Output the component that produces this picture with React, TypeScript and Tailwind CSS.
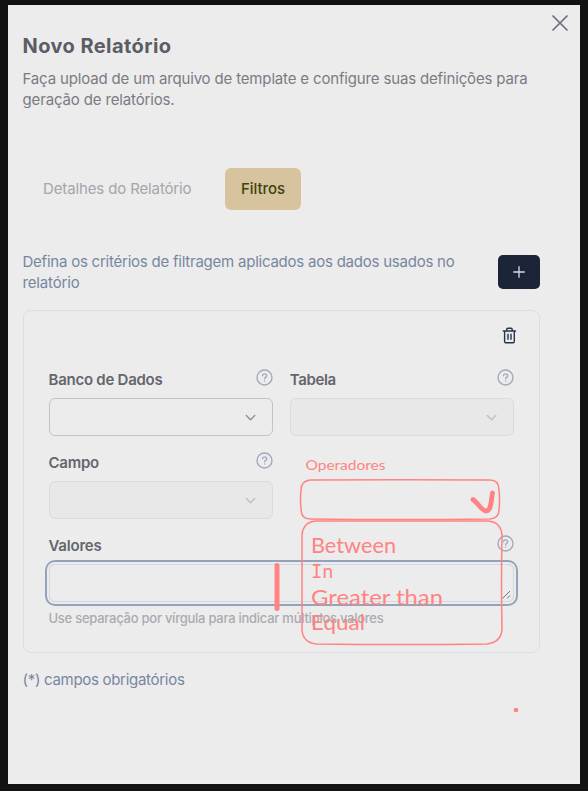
import React from "react";

const font = "font-['Inter',sans-serif]";

function Line({ children, w, className = "" }: { children: string; w: number; className?: string }) {
  const ref = React.useRef<HTMLSpanElement>(null);
  const [gap, setGap] = React.useState(0);
  React.useLayoutEffect(() => {
    if (ref.current) setGap((w - ref.current.getBoundingClientRect().width) / children.length);
  }, [w, children]);
  return (
    <span className={`block w-max whitespace-nowrap ${className}`}>
      <span ref={ref} style={{ letterSpacing: gap }}>{children}</span>
    </span>
  );
}

function Help() {
  return (
    <svg className="mb-1 size-[17px] text-[#a2aabb]" viewBox="0 0 17 17" fill="none" stroke="currentColor" strokeWidth="1.4" strokeLinecap="round" strokeLinejoin="round">
      <circle cx="8.5" cy="8.5" r="7.5" />
      <path d="M6.5 6.7c.2-1.2 1-1.8 2.1-1.8 1.2 0 2.1.7 2.1 1.8 0 1.6-2.1 1.7-2.1 3.1M8.6 12v.1" />
    </svg>
  );
}

function Label({ text, w }: { text: string; w: number }) {
  return (
    <div className="flex h-[23px] items-center justify-between text-[15px] leading-[23px] font-semibold text-[#65656d]">
      <Line w={w}>{text}</Line>
      <Help />
    </div>
  );
}

function Select({ disabled = false }: { disabled?: boolean }) {
  return (
    <div className={`mt-[7px] flex h-[38px] items-center justify-end rounded-md border pr-4 ${disabled ? "border-[#dbdbdc] bg-[#e8e8e8] text-[#bfc0c2]" : "border-[#c4c4c5] bg-[#ececec] text-[#8f949c]"}`}>
      <svg className="size-[11px]" viewBox="0 0 11 11" fill="none" stroke="currentColor" strokeWidth="1.5" strokeLinecap="round" strokeLinejoin="round">
        <path d="M1.3 3.5 5.5 7.7 9.7 3.5" />
      </svg>
    </div>
  );
}

function Sketch() {
  return (
    <svg className="pointer-events-none absolute inset-0 h-[791px] w-[588px]" viewBox="0 0 588 791" fill="none" stroke="#ff8383" strokeLinecap="round" strokeLinejoin="round">
      <path strokeWidth="1.5" d="M310 480Q401 479.500 490 480Q499 480 499 490Q500 500 499 510Q499 518 490 519Q400 520 310 519Q301 519 301 509Q300 500 301 490Q301 481 310 480Z" />
      <path strokeWidth="1.5" d="M316 521H488Q501 522 502 535Q501 585 502 628Q502 642 487 644Q400 645 317 644Q303 643 302 630V535Q303 522 316 521Z" />
      <path strokeWidth="4.8" d="M473 499.500C478 503 482 511 486 511C491.500 511 491 500 492.500 493" />
      <path strokeWidth="5" d="M277 565.500V608.500" />
      <circle cx="516" cy="710" r="2.3" fill="#ff8383" stroke="none" />
      <g fill="#ff8383" stroke="none" className="font-['Lato',sans-serif]">
        <text x="305.500" y="469.500" fontSize="13.5" textLength="80" lengthAdjust="spacingAndGlyphs">Operadores</text>
        <text x="311" y="552.500" fontSize="22" textLength="85" lengthAdjust="spacingAndGlyphs">Between</text>
        <text x="311" y="578" fontSize="19" textLength="22" lengthAdjust="spacingAndGlyphs"><tspan className="font-['DejaVu_Sans_Mono',monospace]">I</tspan>n</text>
        <text x="311" y="604.500" fontSize="21" textLength="132" lengthAdjust="spacingAndGlyphs">Greater than</text>
        <text x="311" y="630" fontSize="21" textLength="54" lengthAdjust="spacingAndGlyphs">Equal</text>
      </g>
    </svg>
  );
}

export default function App() {
  return (
    <div className={`relative h-[791px] w-[588px] overflow-hidden bg-[#121212] px-2 pt-[5px] ${font}`}>
      <main className="h-[779px] bg-[#ececec] pr-[40px] pl-[14.5px]">
        <svg className="absolute top-[15px] left-[552px] size-4 text-[#696f7d]" viewBox="0 0 16 16" fill="none" stroke="currentColor" strokeWidth="1.7" strokeLinecap="round">
          <path d="m1 1 14 14M15 1 1 15" />
        </svg>
        <header className="pt-[27px]">
          <h1 className="text-xl leading-7 font-bold text-[#5c5c66]"><Line w={149}>Novo Relatório</Line></h1>
          <div className="mt-2 text-[15px] leading-[21px] text-[#7b7b83]">
            <Line w={505}>Faça upload de um arquivo de template e configure suas definições para</Line>
            <Line w={152}>geração de relatórios.</Line>
          </div>
        </header>
        <nav className="mt-[58px] flex h-[42px] items-center text-[15px] font-medium">
          <div className="w-[202.5px] pl-[20.5px] font-normal text-[#a5a5ab]"><Line w={148.5}>Detalhes do Relatório</Line></div>
          <button className="flex h-[42px] w-[76px] items-center justify-center rounded-md bg-[#d7c49e] text-[#3f430b]"><Line w={44}>Filtros</Line></button>
        </nav>
        <section className="mt-[41px] flex h-[42px] justify-between text-[15px] leading-[21px] text-[#7787a0]">
          <div>
            <Line w={432}>Defina os critérios de filtragem aplicados aos dados usados no</Line>
            <Line w={57}>relatório</Line>
          </div>
          <button className="mt-1 flex h-[34px] w-[42px] items-center justify-center rounded-[5px] bg-[#1c2538] text-[#d8dbdf]">
            <svg className="size-3" viewBox="0 0 12 12" stroke="currentColor" strokeWidth="1.3" strokeLinecap="round"><path d="M6 .7v10.6M.7 6h10.6" /></svg>
          </button>
        </section>
        <section className="mt-[17px] h-[343px] rounded-lg border border-[#d8dde6] px-[25px] pt-4">
          <div className="flex h-[17px] justify-end">
            <svg className="mr-[-3px] h-[17px] w-[15px] text-[#29334a]" viewBox="0 0 15 17" fill="none" stroke="currentColor" strokeWidth="1.4" strokeLinecap="round" strokeLinejoin="round">
              <path d="M1.3 4h12.2M2.6 4v10.5q0 1.2 1.2 1.2h7.3q1.2 0 1.2-1.2V4M4.8 4V2.5q0-1.2 1.2-1.2h3q1.2 0 1.2 1.2V4M6 7.2v5M9 7.2v5" />
            </svg>
          </div>
          <div className="mt-6 grid grid-cols-2 gap-x-[17px] gap-y-[15px]">
            <div><Label text="Banco de Dados" w={114} /><Select /></div>
            <div><Label text="Tabela" w={46} /><Select disabled /></div>
            <div><Label text="Campo" w={50.5} /><Select disabled /></div>
          </div>
          <div className="mt-[15px]">
            <Label text="Valores" w={53} />
            <div className="mt-[7px] flex h-[38px] items-end justify-end rounded-md border border-[#d3d8e1] p-0.5 ring-2 ring-[#94a3bb] ring-offset-2 ring-offset-[#ececec]">
              <svg className="size-[9px]" viewBox="0 0 9 9" stroke="#6f7175" strokeWidth="1"><path d="M.5 8.5 8 1M5 8.5 8 5.5" /></svg>
            </div>
            <div className="mt-[7px] text-[13px] leading-[18px] font-medium text-[#aaaab0]">
              <Line w={335}>Use separação por vírgula para indicar múltiplos valores</Line>
            </div>
          </div>
        </section>
        <footer className="mt-4 text-[15px] leading-[21px] text-[#7787a0]"><Line w={162}>(*) campos obrigatórios</Line></footer>
      </main>
      <Sketch />
    </div>
  );
}
